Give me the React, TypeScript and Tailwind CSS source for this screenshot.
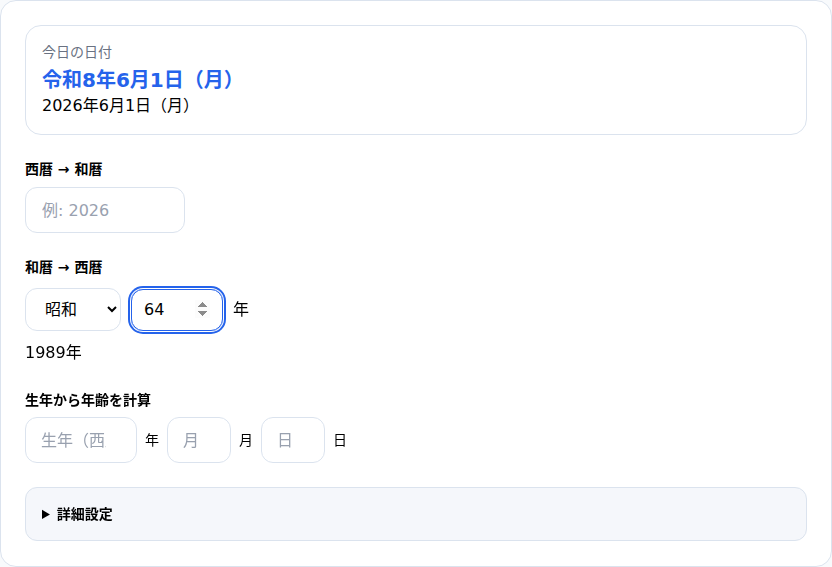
import { useState } from "react";

const App = () => {
  const [era, setEra] = useState("showa");
  const [eraYear, setEraYear] = useState("64");

  return (
    <div className="bg-[#f8fafc] font-[family-name:DejaVu_Sans,Noto_Sans_CJK_JP,sans-serif]">
      <div className="h-[567px] rounded-2xl border border-[#dbe3ee] bg-white p-6">
        <div className="rounded-2xl border border-[#dbe3ee] px-4 pt-4 pb-4">
          <p className="text-sm leading-5 text-gray-500">今日の日付</p>
          <p className="mt-1 text-xl font-bold leading-7 text-[#2563eb]">令和8年6月1日（月）</p>
          <p className="text-base leading-6 text-black">2026年6月1日（月）</p>
        </div>

        <div className="mt-6">
          <p className="text-sm font-bold leading-5 text-black">西暦 → 和暦</p>
          <input
            type="number"
            placeholder="例: 2026"
            className="mt-2 h-[46px] w-40 rounded-xl border border-[#dbe3ee] px-4 text-base placeholder:text-gray-400 focus:outline-none"
          />
        </div>

        <div className="mt-6">
          <p className="text-sm font-bold leading-5 text-black">和暦 → 西暦</p>
          <div className="mt-[11px] flex h-[43px] items-center gap-2">
            <select
              value={era}
              onChange={(e) => setEra(e.target.value)}
              className="h-[43px] w-24 rounded-xl border border-[#dbe3ee] bg-white pl-[15px] pr-1 text-base text-black">
              <option value="reiwa">令和</option>
              <option value="heisei">平成</option>
              <option value="showa">昭和</option>
              <option value="taisho">大正</option>
              <option value="meiji">明治</option>
            </select>
            <input
              type="number"
              autoFocus
              value={eraYear}
              onChange={(e) => setEraYear(e.target.value)}
              className="ml-[2px] h-[42px] w-[92px] rounded-xl border border-[#2563eb] px-3 text-base text-black ring-2 ring-[#2563eb] ring-offset-1 outline-none"
            />
            <span className="ml-[2px] text-base">年</span>
          </div>
          <p className="mt-[10px] text-base leading-6 text-black">1989年</p>
        </div>

        <div className="mt-[25px]">
          <p className="text-sm font-bold leading-5 text-black">生年から年齢を計算</p>
          <div className="mt-[7px] flex items-center gap-2 text-sm">
            <input
              type="number"
              placeholder="生年（西暦）"
              className="h-[46px] w-28 rounded-xl border border-[#dbe3ee] px-[15px] text-base placeholder:text-gray-400 focus:outline-none"
            />
            <span>年</span>
            <input
              type="number"
              placeholder="月"
              className="h-[46px] w-16 rounded-xl border border-[#dbe3ee] px-[15px] text-base placeholder:text-gray-400 focus:outline-none"
            />
            <span>月</span>
            <input
              type="number"
              placeholder="日"
              className="h-[46px] w-16 rounded-xl border border-[#dbe3ee] px-[15px] text-base placeholder:text-gray-400 focus:outline-none"
            />
            <span>日</span>
          </div>
        </div>

        <details className="mt-6 rounded-xl border border-[#dbe3ee] bg-[#f5f7fb] px-4 py-4">
          <summary className="cursor-pointer text-sm font-bold leading-5 text-black">詳細設定</summary>
        </details>
      </div>
    </div>
  );
};

export default App;
